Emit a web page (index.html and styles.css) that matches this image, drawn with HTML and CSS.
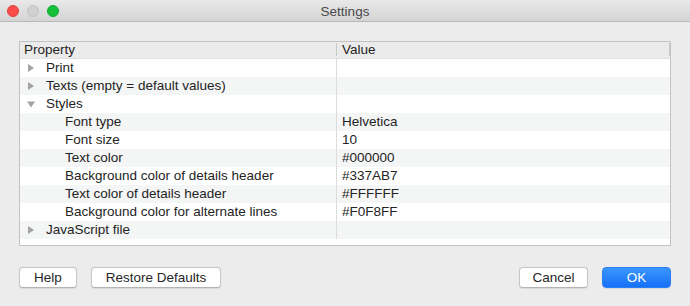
FILE: index.html
```html
<!DOCTYPE html>
<html lang="en">
<head>
  <meta charset="UTF-8">
  <title>Settings</title>
  <link rel="stylesheet" href="styles.css">
</head>
<body>

  <div class="window">
    <div class="titlebar">
      <div class="lights">
        <span class="light red"></span>
        <span class="light grey"></span>
        <span class="light green"></span>
      </div>
      <div class="title">Settings</div>
    </div>

    <div class="content">
      <div class="tree">
        <div class="head">
          <div class="hcell">Property</div>
          <div class="hcell hval">Value</div>
        </div>

        <div class="row">
          <div class="cell"><svg class="arrow" viewBox="0 0 8 8"><path d="M1 0 L7 4 L1 8 Z"/></svg>Print</div>
          <div class="cell val"></div>
        </div>
        <div class="row">
          <div class="cell"><svg class="arrow" viewBox="0 0 8 8"><path d="M1 0 L7 4 L1 8 Z"/></svg>Texts (empty = default values)</div>
          <div class="cell val"></div>
        </div>
        <div class="row">
          <div class="cell"><svg class="arrow" viewBox="0 0 8 8"><path d="M0 1.5 L8 1.5 L4 7.5 Z"/></svg>Styles</div>
          <div class="cell val"></div>
        </div>
        <div class="row">
          <div class="cell child">Font type</div>
          <div class="cell val">Helvetica</div>
        </div>
        <div class="row">
          <div class="cell child">Font size</div>
          <div class="cell val">10</div>
        </div>
        <div class="row">
          <div class="cell child">Text color</div>
          <div class="cell val">#000000</div>
        </div>
        <div class="row">
          <div class="cell child">Background color of details header</div>
          <div class="cell val">#337AB7</div>
        </div>
        <div class="row">
          <div class="cell child">Text color of details header</div>
          <div class="cell val">#FFFFFF</div>
        </div>
        <div class="row">
          <div class="cell child">Background color for alternate lines</div>
          <div class="cell val">#F0F8FF</div>
        </div>
        <div class="row">
          <div class="cell"><svg class="arrow" viewBox="0 0 8 8"><path d="M1 0 L7 4 L1 8 Z"/></svg>JavaScript file</div>
          <div class="cell val"></div>
        </div>
      </div>

      <div class="buttons">
        <button class="btn help">Help</button>
        <button class="btn restore">Restore Defaults</button>
        <div class="spacer"></div>
        <button class="btn cancel">Cancel</button>
        <button class="btn ok">OK</button>
      </div>
    </div>
  </div>

</body>
</html>
```

FILE: styles.css
```css
body {
  margin: 0;
  padding: 0;
  background: #ececec;
  font-family: 'Liberation Sans', Arial, sans-serif;
  font-size: 13.5px;
  color: #242424;
  overflow: hidden;
}

.window {
  width: 690px;
  height: 306px;
  display: flex;
  flex-direction: column;
  background: #ececec;
}

.titlebar {
  height: 21px;
  display: flex;
  align-items: center;
  position: relative;
  background: linear-gradient(#e9e9e9, #d4d4d4);
  border-bottom: 1px solid #b8b8b8;
}

.lights {
  position: absolute;
  left: 7px;
  top: 5px;
  display: flex;
  gap: 8px;
}

.light {
  width: 12px;
  height: 12px;
  border-radius: 50%;
  box-sizing: border-box;
}

.red {
  background: #fd4d4a;
  border: 1px solid #e0403c;
}

.grey {
  background: #d0d0d0;
  border: 1px solid #c2c2c2;
}

.green {
  background: #15c13a;
  border: 1px solid #12a932;
}

.title {
  flex: 1;
  text-align: center;
  color: #4a4a4a;
  padding-top: 1px;
}

.content {
  flex: 1;
  padding: 19px 19px 0 19px;
  display: flex;
  flex-direction: column;
}

.tree {
  height: 203px;
  border: 1px solid #c3c3c3;
  background: #fff;
}

.head {
  display: flex;
  height: 16px;
  background: #ebebeb;
  border-bottom: 1px solid #e2e2e2;
}

.hcell {
  width: 316px;
  padding-left: 4px;
  line-height: 15px;
  box-sizing: border-box;
}

.hcell.hval {
  flex: 1;
  width: auto;
  padding-left: 5px;
  border-left: 1px solid #c9c9c9;
  border-right: 1px solid #c9c9c9;
  margin: 1px 0 2px 0;
  line-height: 13px;
}

.row {
  display: flex;
  height: 18px;
  line-height: 18px;
}

.row:nth-child(odd) {
  background: #f4f5f5;
}

.cell {
  width: 316px;
  box-sizing: border-box;
  padding-left: 7px;
  display: flex;
  align-items: center;
  white-space: nowrap;
}

.cell.child {
  padding-left: 45px;
}

.cell.val {
  flex: 1;
  width: auto;
  padding-left: 5px;
  border-left: 1px solid #dcdcdc;
}

.arrow {
  width: 8px;
  height: 8px;
  fill: #a3a3a3;
  margin-right: 11px;
}

.buttons {
  display: flex;
  align-items: center;
  margin-top: 21px;
  gap: 14px;
}

.spacer {
  flex: 1;
}

.btn {
  height: 21px;
  font-family: inherit;
  font-size: 13.5px;
  color: #262626;
  background: #fff;
  border: 1px solid #c6c6c6;
  border-bottom-color: #b4b4b4;
  border-radius: 4px;
  padding: 0;
  line-height: 19px;
  box-shadow: 0 0.5px 1px rgba(0, 0, 0, 0.08);
}

.help {
  width: 58px;
}

.restore {
  width: 130px;
}

.cancel {
  width: 69px;
  margin-right: 0;
}

.ok {
  width: 69px;
  color: #fff;
  background: linear-gradient(#3b95fb, #1671f9);
  border: 1px solid #2a7ff5;
}
```
